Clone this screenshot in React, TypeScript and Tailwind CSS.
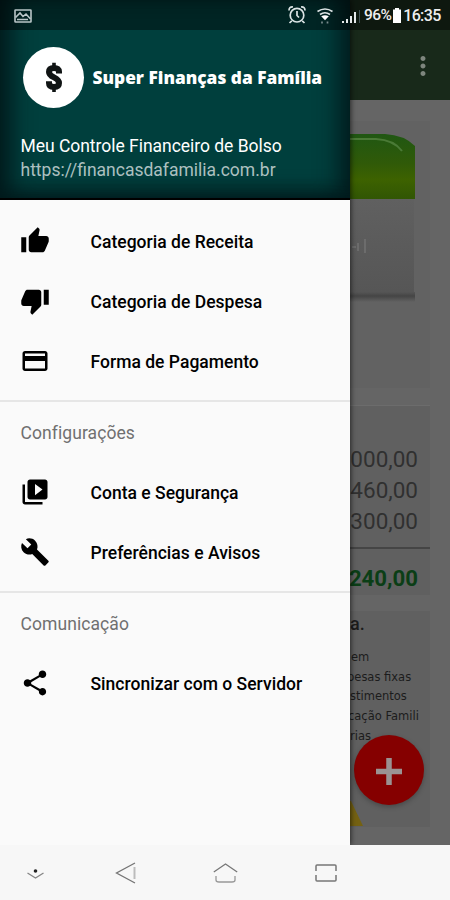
import type { ReactNode } from "react";
import { MdBuild, MdPayment, MdShare, MdThumbDown, MdThumbUp, MdVideoLibrary, MdMoreVert } from "react-icons/md";

function MenuItem({ icon, label }: { icon: ReactNode; label: string }) {
  return (
    <li className="flex h-[60px] items-center pl-[20px] text-black">
      <span className="flex w-[70.5px] text-[30px]">{icon}</span>
      <span className="whitespace-nowrap pt-[2px] text-[17.5px] font-medium tracking-[0.02px]">{label}</span>
    </li>
  );
}

function SectionTitle({ children }: { children: ReactNode }) {
  return (
    <h2 className="flex h-[62px] items-center border-t-2 border-[#e6e6e6] pl-[20.5px] pt-[3px] text-[17.5px] tracking-[0.08px] text-[#707070]">
      {children}
    </h2>
  );
}

function StatusBar() {
  return (
    <div className="absolute inset-x-0 top-0 z-20 flex h-[30px] items-center bg-black/40 text-[#eeeeee]">
      <svg className="ml-[14px] mt-[2px] h-[14px] w-[18px]" viewBox="0 0 18 14" fill="none" stroke="#b9c6c8" strokeWidth="1.6">
        <rect x="1" y="1" width="16" height="12" rx="0.5" />
        <path d="M1.5 8.5 6 4l3 3.5L12 5l4.5 5M3 10.5h11" />
      </svg>
      <svg className="ml-[256px] h-[20px] w-[18px]" viewBox="0 0 18 20" fill="none" stroke="#dbe3e4" strokeWidth="1.7">
        <circle cx="9" cy="10.2" r="6.8" />
        <path d="M1 5.5Q1 1.5 5 2M17 5.5Q17 1.5 13 2M3.8 15.8 1.5 18M14.2 15.8l2.3 2.2M9 6v4.5l2 2" />
      </svg>
      <svg className="ml-[10px] mt-[2px] h-[18px] w-[18px]" viewBox="0 0 18 18" fill="none" stroke="#dbe3e4" strokeWidth="1.7">
        <path d="M1.5 4.5Q9-.5 16.5 4.5M4 7.5q5-3.5 10 0" />
        <path d="M5.2 9.3Q9 7 12.8 9.3L9 13.2Z" fill="#fff" stroke="none" />
        <path d="M6 14.5v2M11.5 14.5v2" stroke="#788b8d" />
      </svg>
      <svg className="ml-[8px] mt-[2px] h-[15px] w-[18px]" viewBox="0 0 18 15" fill="#e5e9e9">
        <path d="M0 12h2v2H0zM4 10h2v4H4zM8 7h2v7H8zM12 3h2v11h-2z" />
        <path d="M17 1h1v13h-1z" fill="#405052" />
      </svg>
      <span className="ml-[4px] pt-[2px] text-[15.5px] font-medium tracking-[-0.6px]">96%</span>
      <svg className="ml-px mt-px h-[15px] w-[10px]" viewBox="0 0 10 15" fill="#fff">
        <path d="M3 0h4v1.5h2V15H1V1.5h2z" />
      </svg>
      <span className="ml-px pt-[2px] text-[16px] font-medium tracking-[-0.65px]">16:35</span>
    </div>
  );
}

function Drawer() {
  return (
    <aside className="relative z-10 w-[350px] shrink-0 bg-[#fafafa] shadow-[1px_0_5px_rgba(0,0,0,0.6)]">
      <header className="flex h-[200px] flex-col border-b-2 border-black bg-[#003f3d] pt-[47px] shadow-[inset_20px_0_24px_-10px_#00191b,inset_-20px_0_24px_-10px_#001b1d,inset_0_-10px_20px_-5px_#001c1e]">
        <div className="flex h-[61px] items-center pl-[23px]">
          <div className="flex size-[61px] items-center justify-center rounded-full bg-white">
            <svg className="h-[31px] w-[18px]" viewBox="0 0 18 31" fill="none" stroke="#101414">
              <path d="M14 11.5V9.8Q14 6 9 6 4 6 4 10q0 3 5 5.4 5 2.4 5 5.6 0 4-5 4-5 0-5-4v-1.8" strokeWidth="6" />
              <path d="M9 .8v5M9 25v5" strokeWidth="3.6" />
            </svg>
          </div>
          <h1 className="ml-[8.5px] whitespace-nowrap pt-px font-['Open_Sans'] text-[17.3px] font-extrabold text-white">
            Super Finanças da Família
          </h1>
        </div>
        <p className="mt-[26px] whitespace-nowrap pl-[20.5px] text-[17.5px] leading-[24px] tracking-[-0.03px] text-white">Meu Controle Financeiro de Bolso</p>
        <p className="whitespace-nowrap pl-[20.5px] text-[17.5px] leading-[24px] text-[#adc0c0]">https://financasdafamilia.com.br</p>
      </header>
      <nav className="pt-[11px]">
        <ul>
          <MenuItem icon={<MdThumbUp />} label="Categoria de Receita" />
          <MenuItem icon={<MdThumbDown />} label="Categoria de Despesa" />
          <MenuItem icon={<MdPayment />} label="Forma de Pagamento" />
        </ul>
        <div className="mt-[9px]">
          <SectionTitle>Configurações</SectionTitle>
          <ul>
            <MenuItem icon={<MdVideoLibrary />} label="Conta e Segurança" />
            <MenuItem icon={<MdBuild />} label="Preferências e Avisos" />
          </ul>
        </div>
        <div className="mt-[9px]">
          <SectionTitle>Comunicação</SectionTitle>
          <ul>
            <MenuItem icon={<MdShare />} label="Sincronizar com o Servidor" />
          </ul>
        </div>
      </nav>
    </aside>
  );
}

function Background() {
  return (
    <main className="relative flex w-[100px] flex-col overflow-hidden bg-[#656565]">
      <div className="flex h-[100px] shrink-0 items-center justify-end bg-[#18291a] pr-[12px] pt-[32px] text-[#7e867e]">
        <MdMoreVert className="size-[30px]" />
      </div>
      <section className="mt-[21px] h-[267px] w-[80px] shrink-0 bg-[#626262] pt-[13px]">
        <svg className="h-[170px] w-[80px]" viewBox="0 0 80 170">
          <defs>
            <linearGradient id="green" x2="0" y2="1">
              <stop stopColor="#205713" />
              <stop offset=".45" stopColor="#305a08" />
              <stop offset=".7" stopColor="#3d6200" />
              <stop offset="1" stopColor="#315604" />
            </linearGradient>
            <linearGradient id="panel" x2="0" y2="1">
              <stop stopColor="#606060" />
              <stop offset="1" stopColor="#565656" />
            </linearGradient>
            <linearGradient id="shade" x2="0" y2="1">
              <stop stopColor="#565656" />
              <stop offset=".4" stopColor="#454545" />
              <stop offset="1" stopColor="#626262" />
            </linearGradient>
          </defs>
          <path d="M0 0h35Q54 1 65 12V65H0Z" fill="url(#green)" />
          <path d="M0 5h26Q44 6 52 17" fill="none" stroke="#4a7a36" strokeWidth="2" />
          <path d="M0 65h64v93H0z" fill="url(#panel)" />
          <path d="M0 158h65v10H0z" fill="url(#shade)" />
          <path d="M15 105v14M2 113h4M8 109v8" fill="none" stroke="#6c6c6c" strokeWidth="2" />
        </svg>
      </section>
      <section className="mt-[17px] flex h-[190px] w-[80px] shrink-0 flex-col border-t border-[#6c6c6c] bg-[#606060] pt-[38px] text-[#303030]">
        <div className="flex flex-col items-end pr-[12px] text-[22.5px] leading-[31px]">
          <span>000,00</span>
          <span>460,00</span>
          <span>300,00</span>
        </div>
        <div className="mt-[10px] flex justify-end border-t-2 border-[#454545] pr-[12px] pt-[14px] text-[22.2px] font-bold leading-[31px] text-[#0b3e16]">
          <span>240,00</span>
        </div>
      </section>
      <section className="mt-[16px] flex h-[216px] w-[80px] shrink-0 flex-col bg-[#606060] text-[#1c1c1c]">
        <p className="mt-[1px] text-[18px] font-medium leading-[24px]">a.</p>
        <div className="mt-[12px] flex flex-col whitespace-nowrap font-['DejaVu_Sans'] text-[11.5px] leading-[19.7px]">
          <span className="pl-px">em</span>
          <span className="-ml-[3px]">pesas fixas</span>
          <span>stimentos</span>
          <span className="-ml-[2px]">cação Famili</span>
          <span>rias</span>
        </div>
        <svg className="mt-auto mb-px h-[25px] w-[13px]" viewBox="0 0 13 25">
          <path d="M1 0 13 25H0V0z" fill="#746112" />
        </svg>
      </section>
      <button className="absolute left-[4px] top-[735px] flex size-[70px] items-center justify-center rounded-full bg-[#850000] shadow-[0_2px_5px_rgba(0,0,0,0.25)]">
        <svg className="mt-[3px] h-[27px] w-[26px]" viewBox="0 0 26 27" stroke="#9b9292" strokeWidth="5.5">
          <path d="M13 0v27M0 13.5h26" />
        </svg>
      </button>
    </main>
  );
}

function NavigationBar() {
  return (
    <footer className="flex h-[55px] items-center bg-[#f7f7f7]">
      <svg className="ml-[26px] mt-[3px] h-[12px] w-[19px]" viewBox="0 0 19 12" fill="none" stroke="#858585" strokeWidth="1.3">
        <path d="m1.5 5 8 5 8-5" />
        <circle cx="9.5" cy="3" r="1.8" fill="#222" stroke="none" />
      </svg>
      <svg className="ml-[70px] h-[22px] w-[21px]" viewBox="0 0 21 22" fill="none" stroke="#747474" strokeWidth="1.3">
        <path d="M20 1 1.5 11 20 21" />
        <path d="M19.5 5v12" stroke="#bcbcbc" strokeWidth="2" />
      </svg>
      <svg className="ml-[77px] h-[22px] w-[25px]" viewBox="0 0 25 22" fill="none" stroke="#777" strokeWidth="1.3">
        <path d="M.8 10 12.5 2l11.7 8" />
        <path d="M3 14v4q0 2 3 2h13q3 0 3-2v-4" stroke="#999" />
      </svg>
      <svg className="ml-[77px] h-[18px] w-[22px]" viewBox="0 0 22 18" fill="none" stroke="#777" strokeWidth="1.5">
        <path d="M1 7V2q0-1 1-1h18q1 0 1 1v5M1 11v5q0 1 1 1h18q1 0 1-1v-5" />
      </svg>
    </footer>
  );
}

export default function App() {
  return (
    <div className="relative flex h-[900px] w-[450px] flex-col overflow-hidden bg-[#fafafa] font-[Roboto,sans-serif]">
      <StatusBar />
      <div className="flex h-[845px] shrink-0 overflow-hidden">
        <Drawer />
        <Background />
      </div>
      <NavigationBar />
    </div>
  );
}
